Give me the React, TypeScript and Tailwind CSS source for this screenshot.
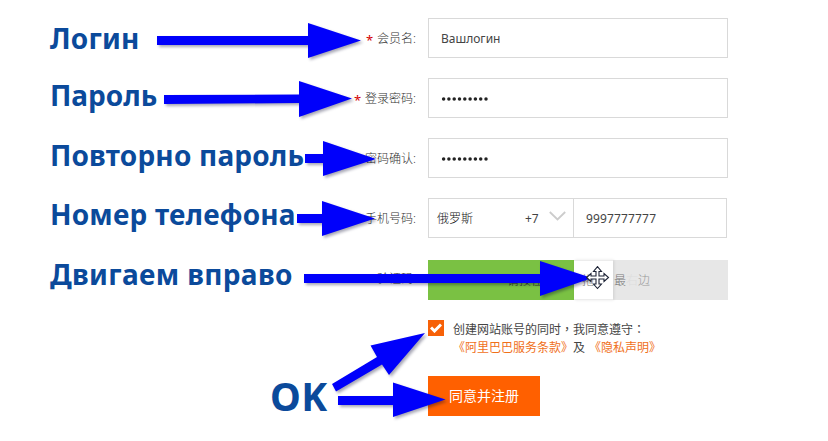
import type { ReactNode } from 'react';

const noteFont = "font-['Noto_Sans'] font-bold text-[#0b4a9b] whitespace-nowrap";
const uiFont = "font-['Noto_Sans','Noto_Sans_CJK_SC',sans-serif]";

function Row({ note, noteClass, label, required, children }: {
  note: string;
  noteClass: string;
  label: string;
  required?: boolean;
  children: ReactNode;
}) {
  return (
    <div className="flex h-10 w-full">
      <div className={`w-[250px] shrink-0 text-[28px] leading-10 ${noteFont} ${noteClass}`}>{note}</div>
      <div className="flex w-[116px] shrink-0 items-center justify-end pt-0.5 text-[12px] font-light text-[#333]">
        {required && <span className="mr-1 mt-0.5 text-[13px] font-normal leading-none text-[#d40000]">*</span>}
        <span>{label}:</span>
      </div>
      <div className="ml-3 w-[300px] shrink-0">{children}</div>
    </div>
  );
}

function Field({ children }: { children: ReactNode }) {
  return (
    <div className="flex h-10 items-center border border-[#d9d9d9] pl-3 text-[12px] text-[#444]">{children}</div>
  );
}

function Dots() {
  return (
    <svg width="50" height="6" fill="#222" className="mt-0.5">
      {Array.from({ length: 9 }, (_, i) => (
        <circle key={i} cx={2.6 + i * 5.3} cy="3" r="1.75" />
      ))}
    </svg>
  );
}

function Arrows() {
  return (
    <svg
      className="pointer-events-none absolute inset-0 drop-shadow-[2px_2px_1.5px_rgba(0,0,40,0.35)]"
      width="828"
      height="441"
      fill="#0000fb"
    >
      <path d="M157 36H308V23L361 40.500L308 58V45H157Z" />
      <path d="M164 95L299 94.500V81L352 98.500L299 117V103L164 104Z" />
      <path d="M305 154H323V141L376 159L323 176V163H305Z" />
      <path d="M297 214H322V201L375 218.500L322 236V223H297Z" />
      <path d="M304 274H540V261L592 278L540 296V283H304Z" />
      <path d="M332 384L377 357L370.500 345.500L425 333L389 375L382 364.500L336 391.500Z" />
      <path d="M338 396H393V382.500L445.500 399.500L393 417V405H338Z" />
    </svg>
  );
}

function MoveCursor() {
  return (
    <svg className="absolute left-[586px] top-[266px]" width="24" height="24" viewBox="0 0 24 24" fill="#fff" stroke="#1c2235" strokeWidth="1.1">
      <path d="M11.500 .6L15.500 5.500H13V10H18V7.500L22.500 11.500L18 15.500V13H13V18H15.500L11.500 22.500L7.500 18H10V13H5V15.500L.6 11.500L5 7.500V10H10V5.500H7.500Z" />
    </svg>
  );
}

export default function App() {
  return (
    <div className={`relative h-[441px] w-[828px] overflow-hidden bg-white ${uiFont}`}>
      <div className="flex flex-col gap-5 pl-[50px] pt-[18px]">
        <Row note="Логин" noteClass="tracking-[0.25px]" label="会员名" required>
          <Field><span className="pt-0.5">Вашлогин</span></Field>
        </Row>
        <Row note="Пароль" noteClass="-mt-[3px]" label="登录密码" required>
          <Field><Dots /></Field>
        </Row>
        <Row note="Повторно пароль" noteClass="-mt-[3px] tracking-[0.2px]" label="密码确认" required>
          <Field><Dots /></Field>
        </Row>
        <Row note="Номер телефона" noteClass="-mt-1 tracking-[0.2px]" label="手机号码" required>
          <div className="flex h-10 w-[299px] border border-[#d9d9d9] text-[12px] text-[#444]">
            <div className="flex w-[145px] items-center border-r border-[#d9d9d9] pl-2">
              <span className="w-[88px] pt-0.5 font-light text-[#111]">俄罗斯</span>
              <span className="w-[24px] pt-px">+7</span>
              <svg width="17" height="10" fill="none" stroke="#ccc" strokeWidth="1.800" className="-mt-1">
                <path d="M.8 1L8.500 8.500L16.200 1" />
              </svg>
            </div>
            <div className="flex items-center pl-3 pt-px tracking-[0.15px]">9997777777</div>
          </div>
        </Row>
        <Row note="Двигаем вправо" noteClass="-mt-1 tracking-[0.35px]" label="验证码" required>
          <div className="mt-0.5 flex h-10 bg-[#e7e7e7] text-[12px] font-light">
            <div className="flex w-[146px] items-center overflow-hidden whitespace-nowrap bg-[#7ac143] pl-[79px] pt-0.5 text-[#333]">请按住滑块</div>
            <div className="flex w-[39px] items-center border-y border-[#ececec] bg-white pl-2 pt-px text-[#777] shadow-[1px_0_3px_rgba(0,0,0,0.1)]">拖</div>
            <div className="flex items-center pl-px pt-0.5">
              <span className="text-[#777]">最</span>
              <span className="text-[#ddd]">右</span>
              <span className="text-[#999]">边</span>
            </div>
          </div>
        </Row>
      </div>

      <div className="flex pt-[22px]">
        <div className={`w-[428px] pl-[270px] pt-[48px] text-[39px] leading-[56px] tracking-[0.3px] ${noteFont}`}>OK</div>
        <div>
          <div className="flex h-14">
            <div className="flex size-4 items-center justify-center bg-[#f76108]">
              <svg width="12" height="10" fill="none" stroke="#fff" strokeWidth="3">
                <path d="M1 4.500L4.500 8L11 1.500" />
              </svg>
            </div>
            <div className="whitespace-nowrap pl-[9px] text-[12px] leading-[18px] text-[#444]">
              <div>
                创建网站账号的同时<span className="font-['Noto_Sans_CJK_TC']">，</span>我同意遵守<span className="font-['Noto_Sans_CJK_TC']">：</span>
              </div>
              <div className="flex text-[#f0701a]">
                <span>《阿里巴巴服务条款》</span>
                <span className="text-[#444]">及</span>
                <span className="pl-[4px]">《隐私声明》</span>
              </div>
            </div>
          </div>
          <div className="flex h-10 w-28 items-center justify-center bg-[#ff6000] pb-px text-[14px] text-white">同意并注册</div>
        </div>
      </div>

      <Arrows />
      <MoveCursor />
    </div>
  );
}
